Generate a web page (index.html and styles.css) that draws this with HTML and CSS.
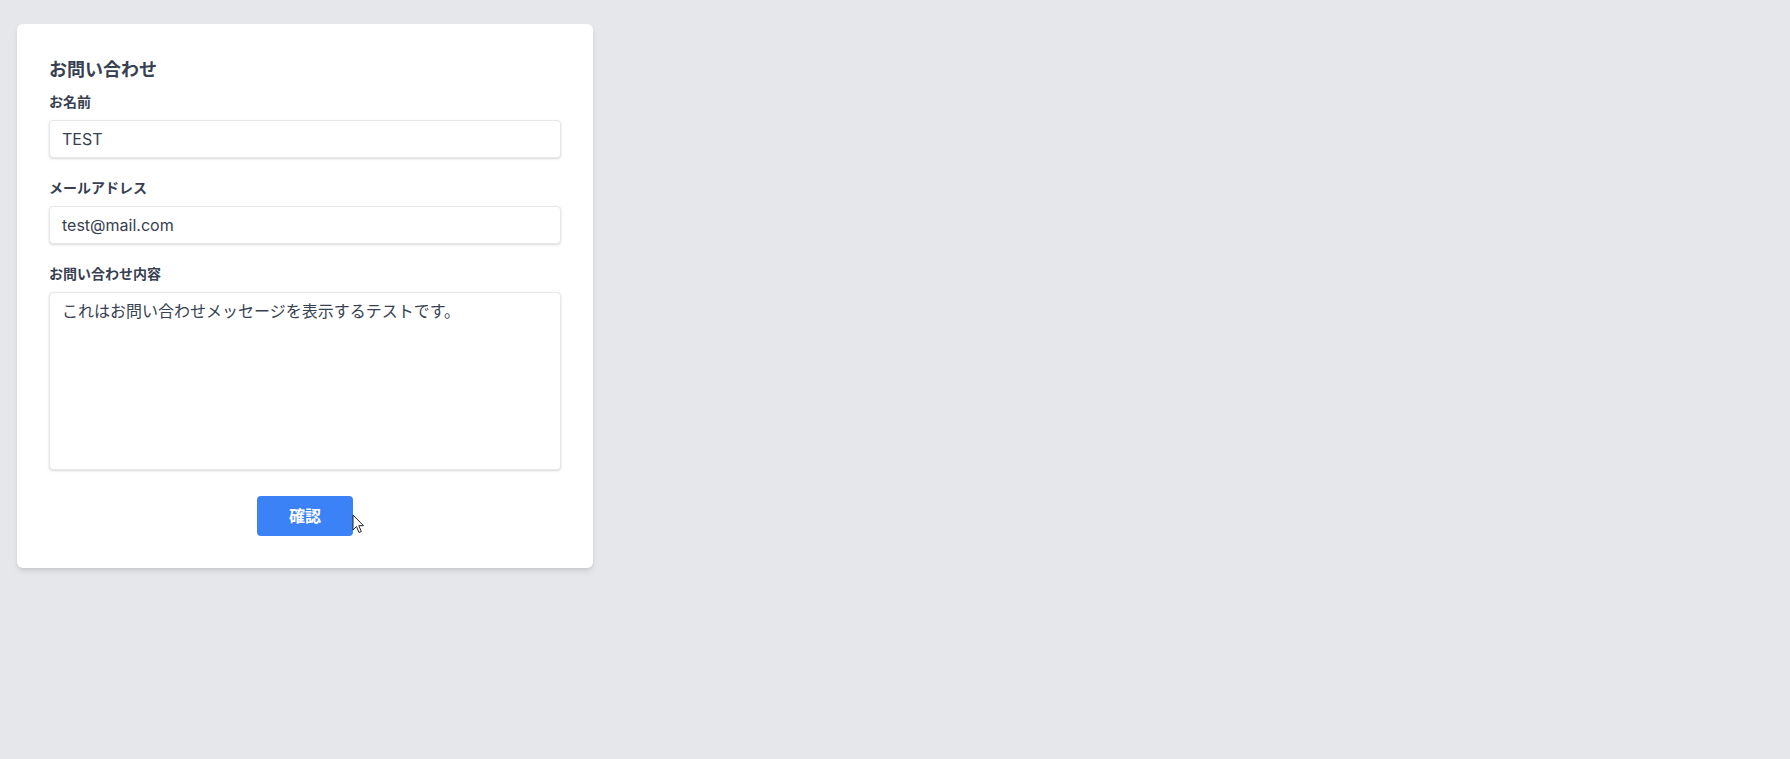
FILE: index.html
```html
<!DOCTYPE html>
<html lang="ja">
<head>
    <meta charset="UTF-8">
    <meta name="viewport" content="width=device-width, initial-scale=1.0">
    <title>お問い合わせ</title>
    <link rel="stylesheet" href="styles.css">
</head>
<body>
    <form class="card" onsubmit="return false;">
        <h1 class="title">お問い合わせ</h1>

        <div class="field">
            <label class="label" for="name">お名前</label>
            <input class="input" id="name" type="text" value="TEST">
        </div>

        <div class="field">
            <label class="label" for="email">メールアドレス</label>
            <input class="input" id="email" type="email" value="test@mail.com">
        </div>

        <div class="field field-last">
            <label class="label" for="message">お問い合わせ内容</label>
            <textarea class="input textarea" id="message" rows="8">これはお問い合わせメッセージを表示するテストです。</textarea>
        </div>

        <div class="actions">
            <button class="button" type="submit">確認</button>
            <!-- mouse pointer from the capture -->
            <svg class="cursor" width="13" height="20" viewBox="0 0 13 20">
                <path d="M1 1 L1 16 L4.5 12.5 L7 18.5 L9.3 17.5 L6.8 11.7 L11.5 11.7 Z" fill="#fff" stroke="#222" stroke-width="1" stroke-linejoin="round"/>
            </svg>
        </div>
    </form>
</body>
</html>
```

FILE: styles.css
```css
body {
    font-family: Inter, "Noto Sans CJK JP", sans-serif;
    background: #e5e7eb;
    color: #374151;
    margin: 0;
    padding: 24px 17px;
}
.card {
    background: #fff;
    width: 576px;
    box-sizing: border-box;
    padding: 32px;
    border-radius: 6px;
    box-shadow: 0 4px 6px -1px rgba(0, 0, 0, 0.1), 0 2px 4px -1px rgba(0, 0, 0, 0.06);
}
.title {
    font-size: 18px;
    line-height: 28px;
    font-weight: 700;
    margin: 0 0 8px;
}
.field { margin-bottom: 20px; }
.field-last { margin-bottom: 26px; }
.label {
    display: block;
    font-size: 14px;
    line-height: 20px;
    font-weight: 700;
    margin-bottom: 8px;
}
.input {
    display: block;
    width: 100%;
    box-sizing: border-box;
    margin: 0;
    padding: 8px 12px;
    border: 1px solid #e5e7eb;
    border-radius: 4px;
    box-shadow: 0 1px 3px rgba(0, 0, 0, 0.1), 0 1px 2px rgba(0, 0, 0, 0.06);
    font-family: inherit;
    font-size: 16px;
    line-height: 20px;
    color: #374151;
    background: #fff;
    outline: none;
}
.textarea {
    height: 178px;
    resize: none;
}
.actions {
    position: relative;
    display: flex;
    justify-content: center;
}
.button {
    background: #3b82f6;
    color: #fff;
    border: none;
    border-radius: 4px;
    padding: 8px 32px;
    font-family: inherit;
    font-size: 16px;
    line-height: 24px;
    font-weight: 700;
    cursor: pointer;
}
.cursor {
    position: absolute;
    left: 303px;
    top: 18px;
}
```
